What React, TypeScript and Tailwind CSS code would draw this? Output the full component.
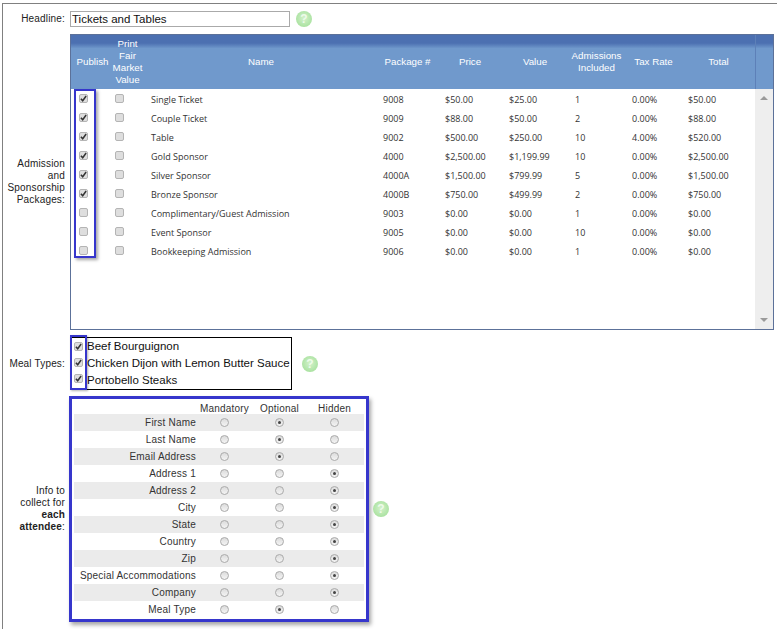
const packages = [
  { on: true, name: "Single Ticket", num: "9008", price: "$50.00", value: "$25.00", adm: "1", tax: "0.00%", total: "$50.00" },
  { on: true, name: "Couple Ticket", num: "9009", price: "$88.00", value: "$50.00", adm: "2", tax: "0.00%", total: "$88.00" },
  { on: true, name: "Table", num: "9002", price: "$500.00", value: "$250.00", adm: "10", tax: "4.00%", total: "$520.00" },
  { on: true, name: "Gold Sponsor", num: "4000", price: "$2,500.00", value: "$1,199.99", adm: "10", tax: "0.00%", total: "$2,500.00" },
  { on: true, name: "Silver Sponsor", num: "4000A", price: "$1,500.00", value: "$799.99", adm: "5", tax: "0.00%", total: "$1,500.00" },
  { on: true, name: "Bronze Sponsor", num: "4000B", price: "$750.00", value: "$499.99", adm: "2", tax: "0.00%", total: "$750.00" },
  { on: false, name: "Complimentary/Guest Admission", num: "9003", price: "$0.00", value: "$0.00", adm: "1", tax: "0.00%", total: "$0.00" },
  { on: false, name: "Event Sponsor", num: "9005", price: "$0.00", value: "$0.00", adm: "10", tax: "0.00%", total: "$0.00" },
  { on: false, name: "Bookkeeping Admission", num: "9006", price: "$0.00", value: "$0.00", adm: "1", tax: "0.00%", total: "$0.00" }
];

const attendeeFields: [string, number][] = [
  ["First Name", 1],
  ["Last Name", 1],
  ["Email Address", 1],
  ["Address 1", 2],
  ["Address 2", 2],
  ["City", 2],
  ["State", 2],
  ["Country", 2],
  ["Zip", 2],
  ["Special Accommodations", 2],
  ["Company", 2],
  ["Meal Type", 1]
];

const COLS = "grid grid-cols-[41px_33px_232px_61px_64px_66px_57px_57px_73px]";

function Check({ on }: { on?: boolean }) {
  return (
    <span className="grid h-[9px] w-[9px] shrink-0 place-items-center rounded-[2px] border border-[#b4b4b4] bg-[#dedede]">
      {on ? (
        <svg aria-hidden="true" className="h-[7px] w-[7px]" viewBox="0 0 8 8">
          <path d="M1 4.2 3.1 6.6 7 1.2" fill="none" stroke="#333" strokeWidth="1.7" />
        </svg>
      ) : null}
    </span>
  );
}

function Radio({ on }: { on?: boolean }) {
  return (
    <span className="grid h-[9px] w-[9px] place-items-center rounded-full border border-[#aaa] bg-gradient-to-b from-[#dcdcdc] to-[#f4f4f4]">
      {on ? <span className="h-[3px] w-[3px] rounded-full bg-[#444]" /> : null}
    </span>
  );
}

function Help() {
  return (
    <span className="grid h-[16px] w-[16px] shrink-0 place-items-center rounded-full bg-[radial-gradient(circle_at_50%_45%,#d4f2cc,#9bdc91)] text-[12px] font-bold leading-none text-[#eefbea]">
      ?
    </span>
  );
}

function Label({ children }: { children: React.ReactNode }) {
  return <div className="w-[62px] shrink-0 text-right text-[10px] leading-[12px] tracking-[0.17px] text-[#222]">{children}</div>;
}

export default function App() {
  return (
    <div className="h-[629px] w-[777px] overflow-hidden bg-white pl-[2px] pt-[3px] font-['Liberation_Sans',sans-serif]">
      <div className="h-[626px] border-l border-t border-[#808080] pt-[7px]">
        <div className="flex h-[16px] items-center">
          <Label>Headline:</Label>
          <input
            className="ml-[5px] h-[16px] w-[220px] border border-[#aaa] px-px pt-px text-[11.5px] text-[#111] outline-none"
            defaultValue="Tickets and Tables"
            readOnly
          />
          <span className="ml-[6px]"><Help /></span>
        </div>

        <div className="mt-[7px] flex items-center">
          <Label>
            Admission
            <br />and
            <br />Sponsorship
            <br />Packages:
          </Label>
          <div className="relative ml-[5px] h-[296px] w-[704px] border border-[#5c7199] font-['Open_Sans',sans-serif]">
            <div className="flex h-[54px] w-full bg-gradient-to-b from-[#4c70b1] from-[15%] to-[#7099cc] to-[25%] text-center font-['Liberation_Sans',sans-serif] text-[9.75px] leading-[12px] text-white">
              <div className={COLS + " items-center"}>
                <span className="pl-[2px]">Publish</span>
                <span className="pr-[2px]">Print Fair Market Value</span>
                <span>Name</span>
                <span>Package #</span>
                <span>Price</span>
                <span>Value</span>
                <span>Admissions Included</span>
                <span>Tax Rate</span>
                <span>Total</span>
              </div>
              <div className="grow border-l border-[#5d80b8]" />
            </div>
            <div className="flex h-[240px]">
              <div className="pt-px">
                {packages.map((p) => (
                  <div className={COLS + " h-[19px] items-center text-[9px] text-[#333]"} key={p.name}>
                    <span className="pb-[2px] pl-[8px]"><Check on={p.on} /></span>
                    <span className="pb-[2px] pl-[3px]"><Check /></span>
                    <span className="pl-[6px]">{p.name}</span>
                    <span className="pl-[6px]">{p.num}</span>
                    <span className="pl-[7px]">{p.price}</span>
                    <span className="pl-[7px]">{p.value}</span>
                    <span className="pl-[7px]">{p.adm}</span>
                    <span className="pl-[7px]">{p.tax}</span>
                    <span className="pl-[6px]">{p.total}</span>
                  </div>
                ))}
              </div>
              <div className="flex grow flex-col items-center justify-between bg-[#eeeeee] pb-[7px] pt-[7px]">
                <svg aria-hidden="true" className="h-[4px] w-[8px]" viewBox="0 0 8 4"><path d="M4 0 8 4H0Z" fill="#9a9a9a" /></svg>
                <svg aria-hidden="true" className="h-[4px] w-[8px]" viewBox="0 0 8 4"><path d="M0 0H8L4 4Z" fill="#9a9a9a" /></svg>
              </div>
            </div>
            <div className="absolute left-[3px] top-[54px] h-[169px] w-[22px] border-2 border-[#3636cc] shadow-[2px_2px_3px_rgba(0,0,0,0.35)]" />
          </div>
        </div>

        <div className="mt-[7px] flex items-center">
          <Label>Meal Types:</Label>
          <div className="relative ml-[5px] w-[222px] whitespace-nowrap border border-black pl-[16px] text-[11.5px] leading-[17px] text-[#111]">
            <div>Beef Bourguignon</div>
            <div>Chicken Dijon with Lemon Butter Sauce</div>
            <div>Portobello Steaks</div>
            <div className="absolute -left-px -top-[3px] flex h-[55px] w-[17px] flex-col items-center justify-around border-2 border-[#3636cc] py-[1px] shadow-[1px_1px_2px_rgba(0,0,0,0.3)]">
              <Check on />
              <Check on />
              <Check on />
            </div>
          </div>
          <span className="ml-[10px]"><Help /></span>
        </div>

        <div className="mt-[6px] flex items-center">
          <Label>
            Info to
            <br />collect for
            <br /><b>each</b>
            <br /><b>attendee</b>:
          </Label>
          <div className="ml-[4px] w-[300px] border-[3px] border-[#3636cc] px-[2px] pb-[1px] pt-[2px] text-[10px] tracking-[0.2px] text-[#333] shadow-[2px_3px_4px_rgba(0,0,0,0.35)]">
            <div className="grid h-[13px] grid-cols-[123px_55px_55px_55px] items-center text-center">
              <span />
              <span>Mandatory</span>
              <span>Optional</span>
              <span>Hidden</span>
            </div>
            {attendeeFields.map(([name, selected], i) => (
              <div className={"grid h-[17px] grid-cols-[122px_55px_55px_55px] items-center " + (i % 2 === 0 ? "bg-[#ebebeb]" : "")} key={name}>
                <span className="text-right">{name}</span>
                {[0, 1, 2].map((col) => (
                  <span className="grid place-items-center pl-[2px]" key={col}><Radio on={col === selected} /></span>
                ))}
              </div>
            ))}
          </div>
          <span className="ml-[4px]"><Help /></span>
        </div>
      </div>
    </div>
  );
}
